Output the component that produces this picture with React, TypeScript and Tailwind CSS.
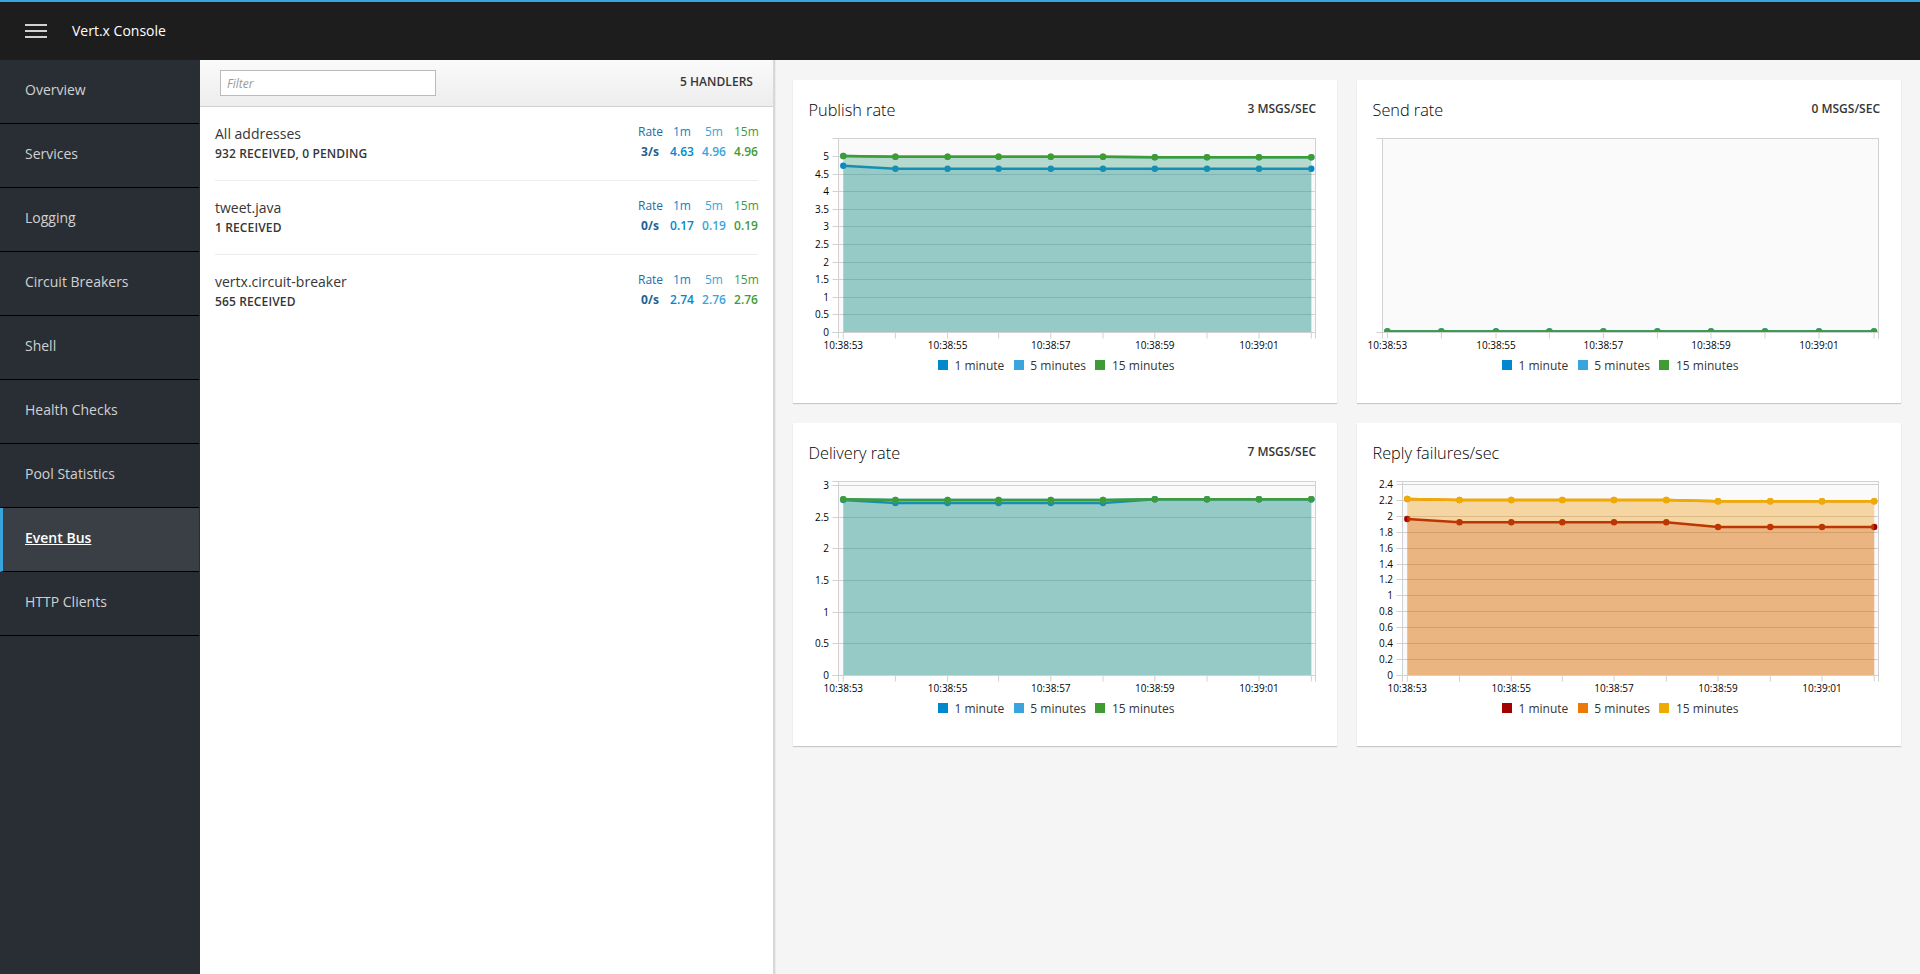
import React from "react";

const NAV = ["Overview", "Services", "Logging", "Circuit Breakers", "Shell", "Health Checks", "Pool Statistics", "Event Bus", "HTTP Clients"];

const ROWS = [
  { name: "All addresses", sub: "932 RECEIVED, 0 PENDING", vals: ["3/s", "4.63", "4.96", "4.96"] },
  { name: "tweet.java", sub: "1 RECEIVED", vals: ["0/s", "0.17", "0.19", "0.19"] },
  { name: "vertx.circuit-breaker", sub: "565 RECEIVED", vals: ["0/s", "2.74", "2.76", "2.76"] },
];

const BLUE = ["#0088ce", "#39a5dc", "#3f9c35"];
const WARM = ["#a30000", "#ec7a08", "#f0ab00"];
const TIMES = ["10:38:53", "10:38:55", "10:38:57", "10:38:59", "10:39:01"];

type Tick = { y: number; label: string };
type ChartProps = {
  id: string;
  left: number;
  right: number;
  xs: number[];
  ticks: Tick[];
  colors: string[];
  series: number[][];
};

const TOP = 8.5;
const BOTTOM = 202.5;
const GRID = "#d1d1d1";

function Chart({ id, left, right, xs, ticks, colors, series }: ChartProps) {
  const all = [left, ...xs, right];
  return (
    <svg width={544} height={226} className="block shrink-0" style={{ fontFamily: "'Open Sans', sans-serif" }}>
      <defs>
        <clipPath id={id}>
          <rect x={left} y={TOP} width={right - left} height={BOTTOM - TOP} />
        </clipPath>
      </defs>
      <rect x={left} y={TOP} width={right - left} height={BOTTOM - TOP} fill="#fafafa" />
      {ticks.map((t) => (
        <line key={t.y} x1={left} x2={right} y1={t.y} y2={t.y} stroke={GRID} />
      ))}
      <g clipPath={`url(#${id})`}>
        {series.map((ys, i) => {
          const pts = ys.map((y, k) => `${xs[k]},${y}`).join(" ");
          const area = `${xs[0]},${BOTTOM} ${pts} ${xs[xs.length - 1]},${BOTTOM}`;
          return (
            <g key={i}>
              <polygon points={area} fill={colors[i]} fillOpacity={0.2} />
              <polyline points={pts} fill="none" stroke={colors[i]} strokeWidth={2.4} />
              {ys.map((y, k) => (
                <circle key={k} cx={xs[k]} cy={y} r={3.2} fill={colors[i]} />
              ))}
            </g>
          );
        })}
      </g>
      <rect x={left} y={TOP} width={right - left} height={BOTTOM - TOP} fill="none" stroke={GRID} />
      {[TOP, BOTTOM, ...ticks.map((t) => t.y)].map((y, i) => (
        <line key={i} x1={left - 6} x2={left} y1={y} y2={y} stroke={GRID} />
      ))}
      {all.map((x, i) => (
        <line key={i} x1={x} x2={x} y1={BOTTOM} y2={BOTTOM + 6} stroke={GRID} />
      ))}
      {ticks.map((t) => (
        <text key={t.label} x={left - 9.5} y={t.y + 3.5} textAnchor="end" fontSize={10} fill="#030303">
          {t.label}
        </text>
      ))}
      {TIMES.map((t, i) => (
        <text key={t} x={xs[i * 2]} y={219} textAnchor="middle" fontSize={10} fill="#030303">
          {t}
        </text>
      ))}
    </svg>
  );
}

function Card({ title, rate, colors, chart }: { title: string; rate?: string; colors: string[]; chart: ChartProps }) {
  return (
    <div className="flex h-[323px] w-[544px] flex-col bg-white shadow-[0_1px_1px_rgba(0,0,0,0.175)]">
      <div className="flex h-[50px] shrink-0 items-center justify-between pl-[15.5px] pr-[21px] pt-[10px]">
        <h2 className="text-[16.3px] font-light leading-5 text-[#030303]">{title}</h2>
        {rate && <span className="-mt-[2px] text-[12px] font-semibold leading-5 text-[#363636]">{rate}</span>}
      </div>
      <Chart {...chart} colors={colors} />
      <div className="flex h-5 items-center pl-[145px] text-[12px] leading-5 text-[#363636]">
        {["1 minute", "5 minutes", "15 minutes"].map((l, i) => (
          <div key={l} className="mr-[9.5px] flex items-center gap-[6.5px]">
            <span className="-mt-[2px] h-2.5 w-2.5" style={{ backgroundColor: colors[i] }} />
            <span>{l}</span>
          </div>
        ))}
      </div>
    </div>
  );
}

const snap = (y: number) => Math.floor(y) + 0.5;
const fill = (a: number, n: number) => Array(n).fill(a) as number[];

const XS_A = [50.3, 102.4, 154.6, 205.6, 257.8, 310, 361.8, 414, 466, 518.3];
const XS_SEND = [30.4, 84.4, 139, 192.4, 246.4, 300.4, 354, 408, 462, 517];
const XS_REPLY = [50.3, 102.5, 154.3, 205.3, 257, 309.3, 361, 413.3, 465, 517.2];

const ticksFrom = (step: number, count: number, mul: number): Tick[] =>
  Array.from({ length: count }, (_, i) => ({
    y: snap(202.5 - i * step),
    label: String(Math.round(i * mul * 10) / 10),
  }));

const publish: ChartProps = {
  id: "clip-publish",
  left: 45.5,
  right: 522.5,
  xs: XS_A,
  colors: BLUE,
  ticks: ticksFrom(17.6, 11, 0.5),
  series: [
    [35.7, ...fill(38.7, 9)],
    [26, 26.7, 26.7, 26.7, 26.7, 26.7, 27.3, 27.3, 27.3, 27.3],
    [26, 26.7, 26.7, 26.7, 26.7, 26.7, 27.3, 27.3, 27.3, 27.3],
  ],
};

const send: ChartProps = {
  id: "clip-send",
  left: 25.5,
  right: 521.5,
  xs: XS_SEND,
  colors: BLUE,
  ticks: [],
  series: [fill(201.5, 10), fill(201.5, 10), fill(201.5, 10)],
};

const delivery: ChartProps = {
  id: "clip-delivery",
  left: 45.5,
  right: 522.5,
  xs: XS_A,
  colors: BLUE,
  ticks: ticksFrom(31.67, 7, 0.5),
  series: [
    [27, ...fill(30, 5), ...fill(26.3, 4)],
    [26.3, ...fill(27, 5), ...fill(26.3, 4)],
    [26.3, ...fill(27, 5), ...fill(26.3, 4)],
  ],
};

const reply: ChartProps = {
  id: "clip-reply",
  left: 45.5,
  right: 521.5,
  xs: XS_REPLY,
  colors: WARM,
  ticks: ticksFrom(15.92, 13, 0.2),
  series: [
    [46, ...fill(49.3, 5), ...fill(54, 4)],
    [26, ...fill(27, 5), ...fill(28.3, 4)],
    [26, ...fill(27, 5), ...fill(28.3, 4)],
  ],
};

export default function App() {
  return (
    <div className="flex h-[974px] w-[1920px] flex-col overflow-hidden bg-[#f5f5f5] font-['Open_Sans',sans-serif] text-[#363636]">
      <header className="flex h-[60px] shrink-0 items-center border-t-2 border-[#39a5dc] bg-[#1d1d1d]">
        <div className="ml-[25px] flex w-[22px] flex-col gap-1">
          <span className="h-[2px] bg-[#d1d1d1]" />
          <span className="h-[2px] bg-[#d1d1d1]" />
          <span className="h-[2px] bg-[#d1d1d1]" />
        </div>
        <span className="ml-[25px] text-[14px] leading-5 text-white">Vert.x Console</span>
      </header>
      <div className="flex min-h-0 flex-1">
        <aside className="w-[200px] shrink-0 border-r border-[#292e34] bg-[#292e34]">
          {NAV.map((n) => {
            const active = n === "Event Bus";
            return (
              <div
                key={n}
                className={
                  active
                    ? "flex h-16 items-center border-b border-l-[3px] border-b-black border-l-[#39a5dc] bg-[#393f44] pb-[5px] pl-[22px] text-[14px] font-semibold text-white underline"
                    : "flex h-16 items-center border-b border-black pb-[5px] pl-[25px] text-[14px] text-[#d1d1d1]"
                }
              >
                {n}
              </div>
            );
          })}
        </aside>
        <section className="w-[575px] shrink-0 border-r-2 border-[#d8d8d8] bg-white shadow-[1px_0_0_#ebebeb]">
          <div className="flex h-[47px] items-center justify-between border-b border-[#d1d1d1] bg-gradient-to-b from-[#fafafa] to-[#ededed] pl-5 pr-5">
            <input
              placeholder="Filter"
              className="h-[26px] w-[216px] border border-[#bbbbbb] bg-white px-[6px] text-[12px] outline-none placeholder:italic placeholder:text-[#999999]"
            />
            <span className="-mt-[2px] text-[12px] font-semibold tracking-[0.05px] text-[#363636]">5 HANDLERS</span>
          </div>
          <div className="mx-[15px]">
            {ROWS.map((r, i) => (
              <div
                key={r.name}
                className={
                  i < 2
                    ? "flex h-[74px] justify-between border-b border-[#ededed] pt-[17px]"
                    : "flex h-[74px] justify-between pt-[17px]"
                }
              >
                <div className="leading-5">
                  <div className="text-[14px] text-[#363636]">{r.name}</div>
                  <div className="text-[12px] font-semibold tracking-[0.13px] text-[#363636]">{r.sub}</div>
                </div>
                <div className="-mt-[2px] grid h-10 w-[120px] grid-cols-[24px_24px_24px_24px] gap-x-2 whitespace-nowrap text-center text-[12px] leading-5">
                  <span className="text-[#2a6b9e]">Rate</span>
                  <span className="text-[#0088ce]">1m</span>
                  <span className="text-[#39a5dc]">5m</span>
                  <span className="text-[#3f9c35]">15m</span>
                  <span className="font-bold text-[#1f5f94]">{r.vals[0]}</span>
                  <span className="font-semibold text-[#0088ce]">{r.vals[1]}</span>
                  <span className="font-semibold text-[#39a5dc]">{r.vals[2]}</span>
                  <span className="font-semibold text-[#3f9c35]">{r.vals[3]}</span>
                </div>
              </div>
            ))}
          </div>
        </section>
        <main className="grid flex-1 grid-cols-[544px_544px] content-start gap-x-5 gap-y-5 pl-[18px] pt-5">
          <Card title="Publish rate" rate="3 MSGS/SEC" colors={BLUE} chart={publish} />
          <Card title="Send rate" rate="0 MSGS/SEC" colors={BLUE} chart={send} />
          <Card title="Delivery rate" rate="7 MSGS/SEC" colors={BLUE} chart={delivery} />
          <Card title="Reply failures/sec" colors={WARM} chart={reply} />
        </main>
      </div>
    </div>
  );
}
